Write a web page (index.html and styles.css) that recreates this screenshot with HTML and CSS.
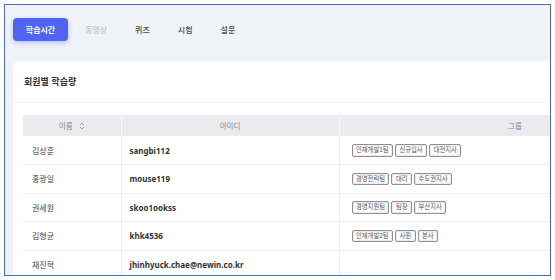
FILE: index.html
```html
<!DOCTYPE html>
<html lang="ko">
<head>
<meta charset="utf-8">
<link rel="stylesheet" href="styles.css">
</head>
<body>
<div class="frame">
  <nav class="tabs">
    <span class="tab active">학습시간</span>
    <span class="tab disabled">동영상</span>
    <span class="tab">퀴즈</span>
    <span class="tab">시험</span>
    <span class="tab">설문</span>
  </nav>
  <section class="card">
    <h2 class="card-title">회원별 학습량</h2>
    <div class="card-body">
      <table class="grid">
        <colgroup>
          <col class="c-name"><col class="c-id"><col class="c-group">
        </colgroup>
        <thead>
          <tr>
            <th>이름 <svg class="sort" width="6" height="8" viewBox="0 0 6 8"><path d="M1 3 L3 1 L5 3 M1 5 L3 7 L5 5" fill="none" stroke="#999" stroke-width="0.9"/></svg></th>
            <th>아이디</th>
            <th>그룹</th>
          </tr>
        </thead>
        <tbody>
          <tr><td class="name">김상훈</td><td class="uid">sangbi112</td><td class="groups"><span class="tag">인재개발1팀</span><span class="tag">신규입사</span><span class="tag">대전지사</span></td></tr>
          <tr><td class="name">홍광일</td><td class="uid">mouse119</td><td class="groups"><span class="tag">경영전략팀</span><span class="tag">대리</span><span class="tag">수도권지사</span></td></tr>
          <tr><td class="name">권세원</td><td class="uid">skoo1ookss</td><td class="groups"><span class="tag">경영지원팀</span><span class="tag">팀장</span><span class="tag">부산지사</span></td></tr>
          <tr><td class="name">김형균</td><td class="uid">khk4536</td><td class="groups"><span class="tag">인재개발2팀</span><span class="tag">사원</span><span class="tag">본사</span></td></tr>
          <tr><td class="name">채진혁</td><td class="uid">jhinhyuck.chae@newin.co.kr</td><td class="groups"></td></tr>
        </tbody>
      </table>
    </div>
  </section>
</div>
</body>
</html>
```

FILE: styles.css
```css
* { box-sizing: border-box; }
html, body { margin: 0; padding: 0; background: #fff; }
body {
  font-family: "Noto Sans", "Noto Sans CJK KR", sans-serif;
  color: #333;
}
.frame {
  margin: 4px 0 0 4px;
  width: 547px;
  height: 272px;
  border: 1px solid #4c6db3;
  background: #eff2f7;
  overflow: hidden;
}
.tabs {
  display: flex;
  align-items: center;
  height: 56px;
  padding: 0 0 8px 8px;
}
.tab {
  font-family: "Noto Sans CJK KR", sans-serif;
  font-size: 8px;
  font-weight: 500;
  color: #4a4d55;
  padding: 0 14px;
  line-height: 23px;
}
.tab.active {
  width: 55px;
  height: 23px;
  padding: 0;
  margin-right: 3px;
  text-align: center;
  background: #5064f2;
  color: #fff;
  font-weight: 700;
  border-radius: 4px;
  box-shadow: 0 2px 5px rgba(80, 100, 242, 0.35);
}
.tab.disabled { color: #c4c8d0; }
.card {
  margin-left: 8px;
  width: 700px;
  background: #fff;
  border-radius: 6px;
  height: 260px;
}
.card-title {
  margin: 0;
  height: 42px;
  padding-left: 11px;
  display: flex;
  align-items: center;
  font-family: "Noto Sans CJK KR", sans-serif;
  font-size: 9px;
  font-weight: 700;
  color: #333;
  border-bottom: 1px solid #f3f4f6;
}
.card-body { padding: 12px 10px 0 10px; }
.grid {
  width: 668px;
  border-collapse: collapse;
  table-layout: fixed;
}
.c-name { width: 98px; }
.c-id { width: 218px; }
.c-group { width: 352px; }
.grid th {
  background: #e9ebef;
  height: 21px;
  font-family: "Noto Sans CJK KR", sans-serif;
  font-size: 7.5px;
  font-weight: 400;
  color: #85888e;
  text-align: center;
  border-right: 1px solid #f7f8fa;
  padding: 0;
}
.sort { margin-left: 4px; vertical-align: -1px; }
.grid td {
  height: 28.5px;
  padding: 0 0 0 8px;
  border-bottom: 1px solid #eceef1;
  border-right: 1px solid #eceef1;
  font-size: 8px;
  vertical-align: middle;
}
.grid td.name {
  font-family: "Noto Sans CJK KR", sans-serif;
  color: #444;
  padding-left: 9px;
}
.grid td.uid {
  font-weight: 700;
  color: #333;
  padding-left: 8px;
}
.grid td.groups { padding-left: 12px; }
.tag {
  display: inline-block;
  height: 12.5px;
  line-height: 10.5px;
  padding: 0 3.5px;
  margin-right: 2px;
  border: 1px solid #8f9194;
  border-radius: 2px;
  box-shadow: inset 0 0 0 1px #ececec;
  font-family: "Noto Sans CJK KR", sans-serif;
  font-size: 6.3px;
  color: #555;
  vertical-align: middle;
}
```
